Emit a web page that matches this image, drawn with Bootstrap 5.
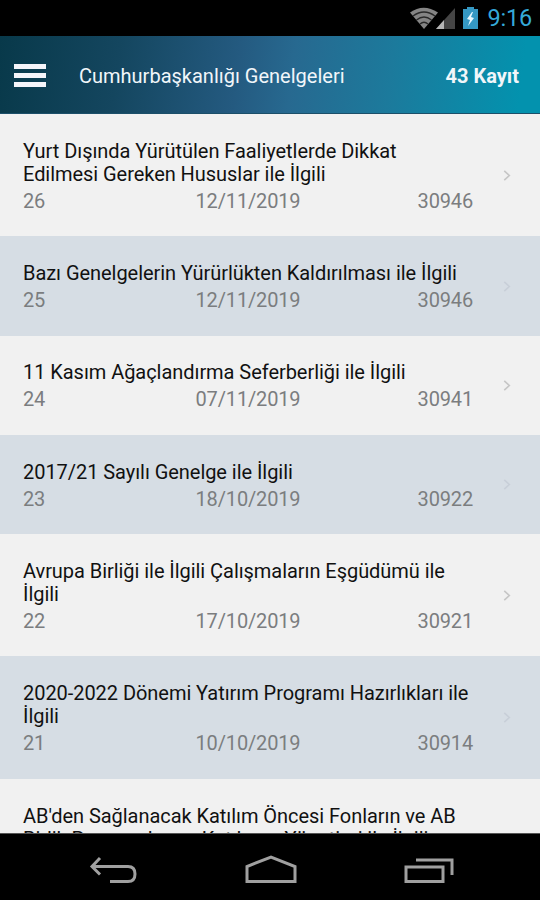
<!DOCTYPE html>
<html lang="tr">
<head>
<meta charset="utf-8">
<meta name="viewport" content="width=device-width, initial-scale=1">
<title>Cumhurbaşkanlığı Genelgeleri</title>
<link href="https://cdn.jsdelivr.net/npm/bootstrap@5.3.0/dist/css/bootstrap.min.css" rel="stylesheet">
<style>
body { font-family: Roboto, "Noto Sans", sans-serif; background: #000; font-size: 20px; }
.screen { height: 900px; }
.status { height: 36px; background: #000; padding-right: 8px; }
.clock { color: #35a9d8; font-size: 23.5px; line-height: 36px; letter-spacing: -.2px; margin-left: 8px; }
.appbar { height: 78px; padding: 2px 21px 0 15px; color: #f1f6fa; background: linear-gradient(97deg, #08394a 0%, #14465f 22%, #245a80 44%, #276990 54%, #1c7a9c 72%, #0392ae 96%); border-bottom: 1px solid #1c4f69; }
.burger { width: 32px; height: 23px; margin-left: -1px; }
.appbar-title { margin-left: 33px; font-size: 20px; }
.count { font-size: 20px; }
.records { background: #f1f1f1; }
.record { background: #f1f1f1; color: #111; border: 0; border-top: 1px solid #c9d5d9; padding: 25.9px 29px 23.4px 23px; }
.record:first-child { border-top-color: #fff; }
.record:nth-child(even) { background: #d6dde4; }
.record-body { width: 450px; }
.record-title { font-size: 20px; line-height: 23px; letter-spacing: -.05px; white-space: nowrap; }
.record-meta { color: #7b7d7f; font-size: 20px; line-height: 23px; margin-top: 4px; letter-spacing: -.15px; }
.chevron { width: 8px; height: 11px; margin-bottom: 2px; stroke: #c6c6c6; }
.record:nth-child(even) .chevron { stroke: #c8cfd8; }
.softkeys { height: 67px; background: #000; border-top: 1px solid #555; padding: 6px 85px 0 88px; }
</style>
<script src="https://cdn.jsdelivr.net/npm/bootstrap@5.3.0/dist/js/bootstrap.bundle.min.js"></script>
</head>
<body>
<div class="screen d-flex flex-column overflow-hidden">
  <div class="status d-flex align-items-center justify-content-end flex-shrink-0">
    <svg width="71" height="24" viewBox="0 0 71 24">
      <path d="M2 6.5Q15.500-3 30 6.500L16 23Z" fill="#858585"/>
      <path d="M5 10Q16 2 27 10M8.500 14Q16 8 23.500 14M12 18Q16 14.500 20 18" fill="none" stroke="#292929" stroke-width="1.300"/>
      <path d="M47 2V23H28Z" fill="#454545"/>
      <path d="M36 14V23H28Z" fill="#b5b5b5"/>
      <path d="M55 3h4V1h7v2h4v20H55Z" fill="#3598c3"/>
      <path d="M64 6l-5 7 3 1-2 6 6-8-3-1 2-5Z" fill="#e8f8ff"/>
    </svg>
    <span class="clock">9:16</span>
  </div>
  <nav class="appbar d-flex align-items-center flex-shrink-0">
    <svg class="burger" viewBox="0 0 32 23"><path d="M0 2.500h32M0 11.500h32M0 20.500h32" stroke="#f5f5fa" stroke-width="4.800"/></svg>
    <span class="appbar-title">Cumhurbaşkanlığı Genelgeleri</span>
    <span class="count fw-bold ms-auto">43 Kayıt</span>
  </nav>
  <main class="records list-group list-group-flush flex-grow-1 overflow-hidden">
    <div class="record list-group-item d-flex align-items-center justify-content-between flex-shrink-0">
      <div class="record-body"><div class="record-title">Yurt Dışında Yürütülen Faaliyetlerde Dikkat<br>Edilmesi Gereken Hususlar ile İlgili</div>
      <div class="record-meta row g-0"><span class="col">26</span><span class="col text-center">12/11/2019</span><span class="col text-end">30946</span></div></div>
      <svg class="chevron" viewBox="0 0 8 12" fill="none" stroke-width="1.800"><path d="M1 1l5.500 5L1 11"/></svg>
    </div>
    <div class="record list-group-item d-flex align-items-center justify-content-between flex-shrink-0">
      <div class="record-body"><div class="record-title">Bazı Genelgelerin Yürürlükten Kaldırılması ile İlgili</div>
      <div class="record-meta row g-0"><span class="col">25</span><span class="col text-center">12/11/2019</span><span class="col text-end">30946</span></div></div>
      <svg class="chevron" viewBox="0 0 8 12" fill="none" stroke-width="1.800"><path d="M1 1l5.500 5L1 11"/></svg>
    </div>
    <div class="record list-group-item d-flex align-items-center justify-content-between flex-shrink-0">
      <div class="record-body"><div class="record-title">11 Kasım Ağaçlandırma Seferberliği ile İlgili</div>
      <div class="record-meta row g-0"><span class="col">24</span><span class="col text-center">07/11/2019</span><span class="col text-end">30941</span></div></div>
      <svg class="chevron" viewBox="0 0 8 12" fill="none" stroke-width="1.800"><path d="M1 1l5.500 5L1 11"/></svg>
    </div>
    <div class="record list-group-item d-flex align-items-center justify-content-between flex-shrink-0">
      <div class="record-body"><div class="record-title">2017/21 Sayılı Genelge ile İlgili</div>
      <div class="record-meta row g-0"><span class="col">23</span><span class="col text-center">18/10/2019</span><span class="col text-end">30922</span></div></div>
      <svg class="chevron" viewBox="0 0 8 12" fill="none" stroke-width="1.800"><path d="M1 1l5.500 5L1 11"/></svg>
    </div>
    <div class="record list-group-item d-flex align-items-center justify-content-between flex-shrink-0">
      <div class="record-body"><div class="record-title">Avrupa Birliği ile İlgili Çalışmaların Eşgüdümü ile<br>İlgili</div>
      <div class="record-meta row g-0"><span class="col">22</span><span class="col text-center">17/10/2019</span><span class="col text-end">30921</span></div></div>
      <svg class="chevron" viewBox="0 0 8 12" fill="none" stroke-width="1.800"><path d="M1 1l5.500 5L1 11"/></svg>
    </div>
    <div class="record list-group-item d-flex align-items-center justify-content-between flex-shrink-0">
      <div class="record-body"><div class="record-title">2020-2022 Dönemi Yatırım Programı Hazırlıkları ile<br>İlgili</div>
      <div class="record-meta row g-0"><span class="col">21</span><span class="col text-center">10/10/2019</span><span class="col text-end">30914</span></div></div>
      <svg class="chevron" viewBox="0 0 8 12" fill="none" stroke-width="1.800"><path d="M1 1l5.500 5L1 11"/></svg>
    </div>
    <div class="record list-group-item d-flex align-items-center justify-content-between flex-shrink-0">
      <div class="record-body"><div class="record-title">AB'den Sağlanacak Katılım Öncesi Fonların ve AB<br>Birlik Programlarına Katılımın Yönetimi ile İlgili</div></div>
    </div>
  </main>
  <div class="softkeys d-flex align-items-center justify-content-between flex-shrink-0">
    <svg width="50" height="30" viewBox="0 0 50 30" fill="none" stroke="#a0a0a0" stroke-width="3"><path d="M12 3L4 11.500l8 8M4 11.500h36q7 0 7 7.500t-7 7.500H22"/></svg>
    <svg width="54" height="30" viewBox="0 0 54 30" fill="none" stroke="#a0a0a0" stroke-width="3"><path d="M3 26.500V11.500L27 2l24 9.500v15Z"/></svg>
    <svg width="52" height="30" viewBox="0 0 52 30" fill="none" stroke="#a0a0a0" stroke-width="3"><path d="M3 12h37v14.500H3ZM13 5h36v15"/></svg>
  </div>
</div>
</body>
</html>
